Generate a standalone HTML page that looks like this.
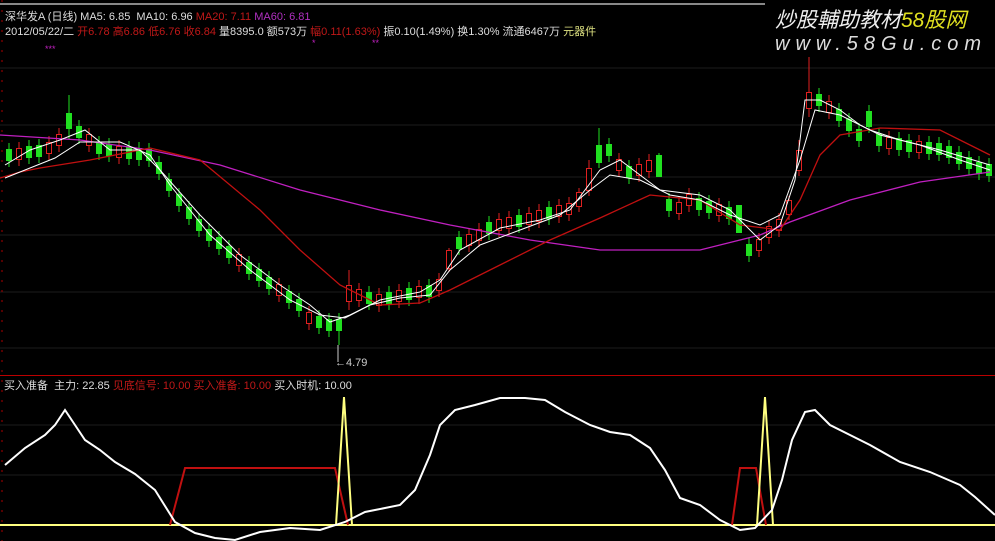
<!DOCTYPE html>
<html><head><meta charset="utf-8"><style>
html,body{margin:0;padding:0;background:#000;width:995px;height:541px;overflow:hidden}
.t{position:absolute;font-family:"Liberation Sans","Noto Sans CJK SC",sans-serif;font-size:11px;white-space:nowrap;color:#ddd}
.g rect{fill:#20e020}
.r rect{fill:#000;stroke:#e02020}
</style></head><body>
<svg width="995" height="541" style="position:absolute;left:0;top:0">
<line x1="0" y1="4" x2="765" y2="4" stroke="#888" stroke-width="2"/>
<g stroke="#1c1c1c"><line x1="0" y1="68" x2="995" y2="68"/><line x1="0" y1="125" x2="995" y2="125"/><line x1="0" y1="177" x2="995" y2="177"/><line x1="0" y1="235" x2="995" y2="235"/><line x1="0" y1="292" x2="995" y2="292"/><line x1="0" y1="348" x2="995" y2="348"/><line x1="0" y1="425" x2="995" y2="425"/><line x1="0" y1="475" x2="995" y2="475"/></g>
<line x1="2" y1="0" x2="2" y2="541" stroke="#a00" stroke-dasharray="2,8"/>
<line x1="0" y1="375.5" x2="995" y2="375.5" stroke="#b00"/>
<path stroke="#20e020" fill="none" d="M9 143v24M29 140v24M39 139v24M69 95v44M79 120v24M99 136v24M109 138v24M129 141v24M139 142v24M149 143v24M159 156v24M169 173v24M179 188v24M189 201v24M199 213v24M209 223v24M219 231v24M229 240v24M249 256v24M259 263v24M269 271v24M289 285v24M299 293v24M319 310v24M329 313v24M339 313v32M369 286v24M389 286v24M409 282v24M429 279v24M459 231v24M489 216v24M519 209v24M549 201v24M599 128v40M609 138v24M629 160v24M659 153v24M669 193v24M699 192v24M709 195v24M729 201v24M739 208v24M749 238v24M819 88v24M839 103v24M849 113v24M859 123v24M869 105v28M879 128v24M899 132v24M909 134v24M929 136v24M939 137v24M949 140v24M959 146v24M969 151v24M979 156v24M989 158v24"/>
<path stroke="#e02020" fill="none" d="M19 142v24M49 136v24M59 128v24M89 128v24M119 140v24M239 248v24M279 278v24M309 306v24M349 270v40M359 283v24M379 288v24M399 284v24M419 280v24M439 273v24M449 248v24M469 228v24M479 223v24M499 213v24M509 211v24M529 207v24M539 204v24M559 199v24M569 197v24M579 188v24M589 160v36M619 153v24M639 158v24M649 154v24M679 196v24M689 188v24M719 198v24M759 233v24M769 220v24M779 213v24M789 196v24M799 140v36M809 57v60M829 95v24M889 131v24M919 135v24"/>
<g class="g">
<rect x="6" y="149" width="6" height="12"/><rect x="26" y="146" width="6" height="12"/><rect x="36" y="145" width="6" height="12"/><rect x="66" y="113" width="6" height="16"/><rect x="76" y="126" width="6" height="12"/><rect x="96" y="142" width="6" height="12"/><rect x="106" y="144" width="6" height="12"/><rect x="126" y="147" width="6" height="12"/><rect x="136" y="148" width="6" height="12"/><rect x="146" y="149" width="6" height="12"/><rect x="156" y="162" width="6" height="12"/><rect x="166" y="179" width="6" height="12"/><rect x="176" y="194" width="6" height="12"/><rect x="186" y="207" width="6" height="12"/><rect x="196" y="219" width="6" height="12"/><rect x="206" y="229" width="6" height="12"/><rect x="216" y="237" width="6" height="12"/><rect x="226" y="246" width="6" height="12"/><rect x="246" y="262" width="6" height="12"/><rect x="256" y="269" width="6" height="12"/><rect x="266" y="277" width="6" height="12"/><rect x="286" y="291" width="6" height="12"/><rect x="296" y="299" width="6" height="12"/><rect x="316" y="316" width="6" height="12"/><rect x="326" y="319" width="6" height="12"/><rect x="336" y="319" width="6" height="12"/><rect x="366" y="292" width="6" height="12"/><rect x="386" y="292" width="6" height="12"/><rect x="406" y="288" width="6" height="12"/><rect x="426" y="285" width="6" height="12"/><rect x="456" y="237" width="6" height="12"/><rect x="486" y="222" width="6" height="12"/><rect x="516" y="215" width="6" height="12"/><rect x="546" y="207" width="6" height="12"/><rect x="596" y="145" width="6" height="18"/><rect x="606" y="144" width="6" height="12"/><rect x="626" y="166" width="6" height="12"/><rect x="656" y="155" width="6" height="22"/><rect x="666" y="199" width="6" height="12"/><rect x="696" y="198" width="6" height="12"/><rect x="706" y="201" width="6" height="12"/><rect x="726" y="207" width="6" height="12"/><rect x="736" y="205" width="6" height="28"/><rect x="746" y="244" width="6" height="12"/><rect x="816" y="94" width="6" height="12"/><rect x="836" y="109" width="6" height="12"/><rect x="846" y="119" width="6" height="12"/><rect x="856" y="129" width="6" height="12"/><rect x="866" y="111" width="6" height="16"/><rect x="876" y="134" width="6" height="12"/><rect x="896" y="138" width="6" height="12"/><rect x="906" y="140" width="6" height="12"/><rect x="926" y="142" width="6" height="12"/><rect x="936" y="143" width="6" height="12"/><rect x="946" y="146" width="6" height="12"/><rect x="956" y="152" width="6" height="12"/><rect x="966" y="157" width="6" height="12"/><rect x="976" y="162" width="6" height="12"/><rect x="986" y="164" width="6" height="12"/>
</g>
<g class="r">
<rect x="16.5" y="148.5" width="5" height="11"/><rect x="46.5" y="142.5" width="5" height="11"/><rect x="56.5" y="134.5" width="5" height="11"/><rect x="86.5" y="134.5" width="5" height="11"/><rect x="116.5" y="146.5" width="5" height="11"/><rect x="236.5" y="254.5" width="5" height="11"/><rect x="276.5" y="284.5" width="5" height="11"/><rect x="306.5" y="312.5" width="5" height="11"/><rect x="346.5" y="285.5" width="5" height="16"/><rect x="356.5" y="289.5" width="5" height="11"/><rect x="376.5" y="294.5" width="5" height="11"/><rect x="396.5" y="290.5" width="5" height="11"/><rect x="416.5" y="286.5" width="5" height="11"/><rect x="436.5" y="279.5" width="5" height="11"/><rect x="446.5" y="250.5" width="5" height="18"/><rect x="466.5" y="234.5" width="5" height="11"/><rect x="476.5" y="229.5" width="5" height="11"/><rect x="496.5" y="219.5" width="5" height="11"/><rect x="506.5" y="217.5" width="5" height="11"/><rect x="526.5" y="213.5" width="5" height="11"/><rect x="536.5" y="210.5" width="5" height="11"/><rect x="556.5" y="205.5" width="5" height="11"/><rect x="566.5" y="203.5" width="5" height="11"/><rect x="576.5" y="192.5" width="5" height="14"/><rect x="586.5" y="168.5" width="5" height="22"/><rect x="616.5" y="159.5" width="5" height="11"/><rect x="636.5" y="164.5" width="5" height="11"/><rect x="646.5" y="160.5" width="5" height="11"/><rect x="676.5" y="202.5" width="5" height="11"/><rect x="686.5" y="194.5" width="5" height="11"/><rect x="716.5" y="204.5" width="5" height="11"/><rect x="756.5" y="239.5" width="5" height="11"/><rect x="766.5" y="226.5" width="5" height="11"/><rect x="776.5" y="219.5" width="5" height="11"/><rect x="786.5" y="200.5" width="5" height="14"/><rect x="796.5" y="150.5" width="5" height="20"/><rect x="806.5" y="92.5" width="5" height="16"/><rect x="826.5" y="101.5" width="5" height="11"/><rect x="886.5" y="137.5" width="5" height="11"/><rect x="916.5" y="141.5" width="5" height="11"/>
</g>
<polyline fill="none" stroke="#c020c0" stroke-width="1.3" points="0,135 80,140 150,150 220,165 300,190 380,210 450,225 530,240 600,250 700,250 760,235 790,222 850,200 920,182 990,172"/>
<polyline fill="none" stroke="#c01010" stroke-width="1.3" points="0,178 20,172 40,168 90,160 150,148 200,160 260,210 300,250 340,285 380,305 420,303 450,290 500,265 550,240 600,218 650,195 700,200 740,225 780,230 800,200 820,155 840,135 880,128 940,130 970,145 990,155"/>
<polyline fill="none" stroke="#fff" stroke-width="1" points="5,165 30,150 60,140 85,130 110,150 140,150 160,170 200,215 240,255 280,285 310,305 330,322 350,315 380,300 420,292 440,280 460,250 500,228 540,220 570,210 600,170 620,160 640,175 660,190 700,195 730,210 760,240 780,225 795,180 805,100 820,100 840,110 860,125 880,135 920,145 960,160 990,170"/>
<polyline fill="none" stroke="#fff" stroke-width="1" points="5,178 30,168 55,158 80,142 120,142 150,155 170,185 210,235 250,270 290,300 320,315 345,318 370,305 400,298 430,295 450,270 480,245 520,230 560,215 590,190 610,175 640,180 670,195 700,200 730,215 760,225 780,215 800,160 815,110 840,115 870,130 900,140 940,150 990,165"/>
<text x="335" y="366" fill="#ccc" font-family="Liberation Sans" font-size="11">←4.79</text>
<line x1="338" y1="345" x2="338" y2="362" stroke="#ccc"/>
<line x1="0" y1="525" x2="995" y2="525" stroke="#ffff80" stroke-width="2"/>
<polyline fill="none" stroke="#c01010" stroke-width="2" points="170,525 185,468 335,468 348,525"/>
<polyline fill="none" stroke="#c01010" stroke-width="2" points="732,525 740,468 756,468 766,525"/>
<polyline fill="none" stroke="#ffff80" stroke-width="2" points="336,525 344,397 352,525"/>
<polyline fill="none" stroke="#ffff80" stroke-width="2" points="757,525 765,397 773,525"/>
<polyline fill="none" stroke="#fff" stroke-width="2" points="5,465 25,448 45,435 55,425 65,410 75,425 85,440 100,450 115,462 135,474 155,490 175,522 195,533 215,538 235,540 260,532 290,528 320,530 345,522 365,512 385,508 400,505 415,490 430,455 440,425 455,410 475,405 500,398 525,398 545,400 565,412 590,425 610,432 630,435 650,448 665,470 680,498 700,505 720,520 740,530 755,528 772,510 782,480 792,440 805,412 815,410 830,425 850,435 870,445 900,462 930,472 960,485 975,497 995,515"/>
<text x="45" y="52" fill="#c020c0" font-size="9" font-family="Liberation Sans">***</text>
<text x="312" y="46" fill="#c020c0" font-size="9" font-family="Liberation Sans">*</text>
<text x="372" y="46" fill="#c020c0" font-size="9" font-family="Liberation Sans">**</text>
</svg>
<div class="t" style="left:5px;top:8px">深华发A (日线) MA5: 6.85 &nbsp;MA10: 6.96 <span style="color:#c01818">MA20: 7.11</span> <span style="color:#b030c0">MA60: 6.81</span></div>
<div class="t" style="left:5px;top:23px">2012/05/22/二 <span style="color:#c01818">开6.78 高6.86 低6.76 收6.84</span> 量8395.0 额573万 <span style="color:#c01818">幅0.11(1.63%)</span> 振0.10(1.49%) 换1.30% 流通6467万 <span style="color:#dde080">元器件</span></div>
<div class="t" style="left:775px;top:4px;font-size:21px;font-style:italic;color:#eee">炒股輔助教材<span style="color:#e0e020">58股网</span></div>
<div class="t" style="left:775px;top:33px;font-size:20px;font-style:italic;color:#ddd;letter-spacing:6px">www.58Gu.com</div>
<div class="t" style="left:4px;top:377px">买入准备 &nbsp;主力: 22.85 <span style="color:#c01818">见底信号: 10.00 买入准备: 10.00</span> 买入时机: 10.00</div>
</body></html>
